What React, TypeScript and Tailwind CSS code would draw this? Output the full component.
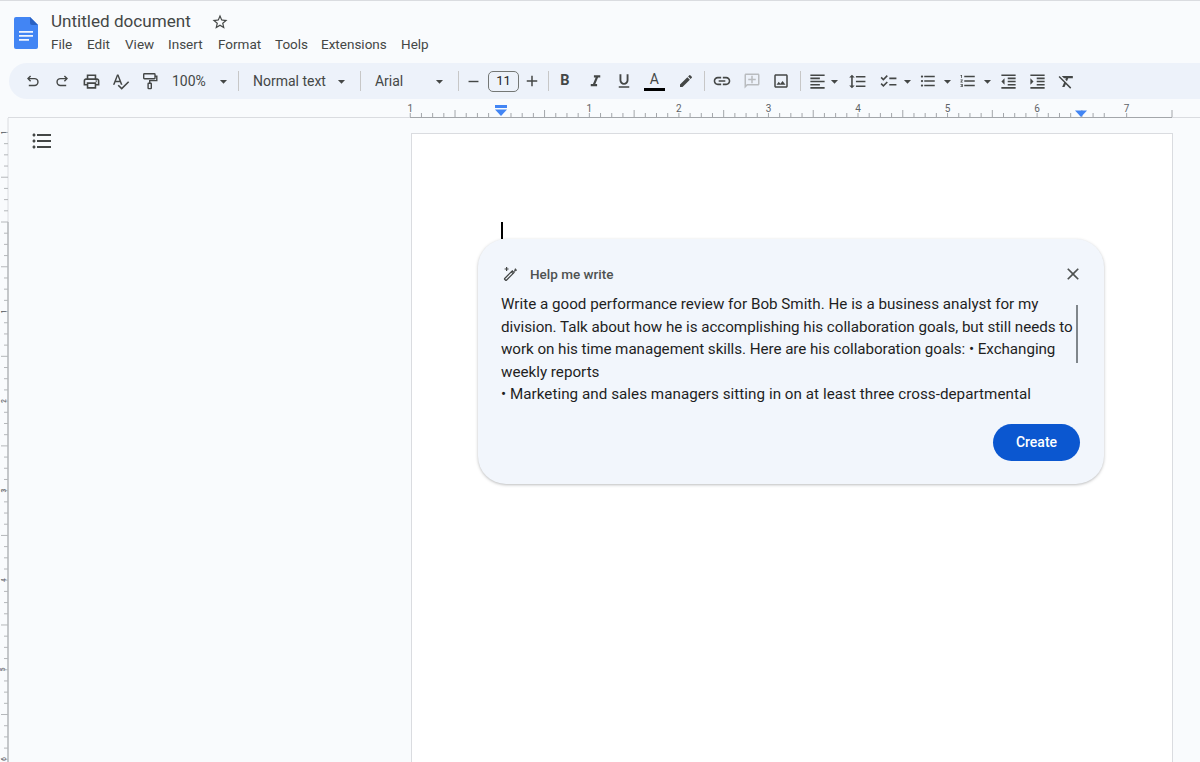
import type { ReactNode } from "react"
import {
  MdOutlineLocalPrintshop,
  MdSpellcheck,
  MdArrowDropDown,
  MdRemove,
  MdAdd,
  MdFormatItalic,
  MdFormatUnderlined,
  MdEdit,
  MdLink,
  MdOutlineAddComment,
  MdOutlineImage,
  MdFormatAlignLeft,
  MdFormatLineSpacing,
  MdChecklist,
  MdFormatListBulleted,
  MdFormatListNumbered,
  MdFormatIndentDecrease,
  MdFormatIndentIncrease,
  MdFormatClear,
  MdStarBorder,
  MdClose,
} from "react-icons/md"

const INCH = 89.55
const ZERO = 499.8

function DocsLogo() {
  return (
    <svg width="24" height="32" viewBox="0 0 24 32" className="shrink-0">
      <path d="M2 0h14l8 8v22a2 2 0 0 1-2 2H2a2 2 0 0 1-2-2V2a2 2 0 0 1 2-2z" fill="#4285f4" />
      <path d="M16 0l8 8h-6a2 2 0 0 1-2-2z" fill="#2a62c4" />
      <path d="M5 14h14v1.7H5zM5 18h14v1.7H5zM5 22h10v1.7H5z" fill="#f1f5fd" />
    </svg>
  )
}

function PenSpark() {
  return (
    <svg width="16" height="16" viewBox="0 0 16 16" fill="none" stroke="#444746" strokeWidth="1.3">
      <path d="M2.6 14.2l-.9-.9a.6.6 0 0 1 0-.8l7.6-7.6 1.7 1.7-7.6 7.6a.6.6 0 0 1-.8 0z" />
      <path d="M8.3 5.9l1.7 1.7" />
      <path d="M12.2 2.6l1.6 1.6-2.6 1.4 1-3z" fill="#444746" strokeWidth="0.6" />
      <path d="M3.6 1v4M1.6 3h4" strokeWidth="1.2" />
    </svg>
  )
}

function UndoIcon({ flip = false }: { flip?: boolean }) {
  return (
    <svg
      width="14"
      height="14"
      viewBox="0 0 14 14"
      fill="none"
      stroke="#444746"
      strokeWidth="1.4"
      className={flip ? "-scale-x-100" : ""}
    >
      <path d="M4.6 2L2 4.6l2.6 2.6" />
      <path d="M2.2 4.6h6.3a3.4 3.4 0 0 1 0 6.9H2.8" />
    </svg>
  )
}

function PaintIcon() {
  return (
    <svg width="16" height="18" viewBox="0 0 16 18" fill="none" stroke="#444746" strokeWidth="1.4">
      <rect x="1.7" y="1.7" width="11.3" height="5" rx="0.7" />
      <path d="M13 4.2h1.8v4.4H7.7v2.6" />
      <rect x="6.1" y="11.2" width="3.2" height="5.4" rx="0.6" />
    </svg>
  )
}

function Slot({ children, w = "w-[29.2px]" }: { children: ReactNode; w?: string }) {
  return <div className={`${w} h-full shrink-0 flex items-center justify-center`}>{children}</div>
}

function Sep() {
  return <div className="w-px h-[20px] bg-[#c7c7c7] shrink-0" />
}

function Caret({ w = "w-[20px]" }: { w?: string }) {
  return (
    <Slot w={w}>
      <MdArrowDropDown size={17} className="shrink-0 text-[#444746]" />
    </Slot>
  )
}

function Toolbar() {
  return (
    <div className="ml-[9px] h-[36px] rounded-l-full bg-[#edf2fa] flex items-center pl-[9.5px] text-[#444746] text-[14px]">
      <Slot><UndoIcon /></Slot>
      <Slot><UndoIcon flip /></Slot>
      <Slot><MdOutlineLocalPrintshop size={19} /></Slot>
      <Slot><MdSpellcheck size={19} /></Slot>
      <Slot><PaintIcon /></Slot>
      <span className="ml-[7.5px] w-[42px] shrink-0">100%</span>
      <Caret />
      <div className="w-[4.5px] shrink-0" />
      <Sep />
      <span className="ml-[13.5px] w-[79px] shrink-0">Normal text</span>
      <Caret />
      <div className="w-[8px] shrink-0" />
      <Sep />
      <span className="ml-[14px] w-[55px] shrink-0">Arial</span>
      <Caret />
      <div className="w-[8px] shrink-0" />
      <Sep />
      <Slot w="w-[29px]"><MdRemove size={17} /></Slot>
      <div className="w-[31px] h-[21px] shrink-0 rounded-[5px] border border-[#747775] flex items-center justify-center text-[13px] text-[#1f1f1f]">
        11
      </div>
      <Slot w="w-[27px]"><MdAdd size={18} /></Slot>
      <div className="w-[2px] shrink-0" />
      <Sep />
      <Slot w="w-[32px]"><span className="text-[14.5px] font-bold">B</span></Slot>
      <Slot w="w-[29px]"><MdFormatItalic size={19} /></Slot>
      <Slot w="w-[29px]"><MdFormatUnderlined size={18} /></Slot>
      <div className="ml-[5px] w-[21px] h-full shrink-0 flex flex-col items-center justify-center">
        <span className="text-[14px] leading-[15px]">A</span>
        <div className="w-[21px] h-[3px] bg-black mt-[1px]" />
      </div>
      <Slot w="w-[39px]"><MdEdit size={16} className="ml-[3px]" /></Slot>
      <Sep />
      <Slot w="w-[35px]"><MdLink size={20} /></Slot>
      <Slot w="w-[25px]"><MdOutlineAddComment size={18} className="-scale-x-100 text-[#b9bcbf]" /></Slot>
      <Slot w="w-[32px]"><MdOutlineImage size={18} /></Slot>
      <div className="w-[3px] shrink-0" />
      <Sep />
      <div className="w-[5px] shrink-0" />
      <Slot w="w-[24px]"><MdFormatAlignLeft size={19} /></Slot>
      <Caret w="w-[9px]" />
      <Slot w="w-[37px]"><MdFormatLineSpacing size={19} /></Slot>
      <Slot w="w-[25px]"><MdChecklist size={19} /></Slot>
      <Caret w="w-[13px]" />
      <Slot w="w-[29px]"><MdFormatListBulleted size={18} /></Slot>
      <Caret w="w-[9px]" />
      <Slot w="w-[33px]"><MdFormatListNumbered size={18} /></Slot>
      <Caret w="w-[5px]" />
      <Slot w="w-[38px]"><MdFormatIndentDecrease size={19} /></Slot>
      <Slot w="w-[19px]"><MdFormatIndentIncrease size={19} className="shrink-0" /></Slot>
      <Slot w="w-[40px]"><MdFormatClear size={19} /></Slot>
    </div>
  )
}

function TopRuler() {
  const ticks = []
  for (let i = -7; i <= 54; i++) {
    const x = ZERO + (i * INCH) / 8
    if (x > 1173) break
    if (i % 8 === 0) continue
    const h = i % 4 === 0 ? 7 : 4
    ticks.push(<line key={i} x1={x} x2={x} y1={117} y2={117 - h} stroke="#a3a6aa" strokeWidth="1" />)
  }
  const labels = [
    { n: 1, x: ZERO - INCH },
    ...[1, 2, 3, 4, 5, 6, 7].map((n) => ({ n, x: ZERO + n * INCH })),
  ]
  return (
    <svg width="1200" height="19" viewBox="0 99 1200 19" className="block">
      <line x1="8" x2="1200" y1="117.5" y2="117.5" stroke="#dadce0" />
      <line x1="410" x2="1172" y1="117.5" y2="117.5" stroke="#a3a6aa" />
      {ticks}
      <line x1="1172" x2="1172" y1="110" y2="117" stroke="#a3a6aa" />
      {labels.map((l) => (
        <g key={l.x}>
          <text x={l.x} y={111.5} textAnchor="middle" fontSize="10" fill="#5f6368" fontFamily="Roboto, sans-serif">
            {l.n}
          </text>
          <line x1={l.x} x2={l.x} y1={113} y2={117} stroke="#a3a6aa" />
        </g>
      ))}
      <rect x="495" y="105" width="12" height="3" fill="#4285f4" />
      <path d="M495 109.5h12l-6 6.5z" fill="#4285f4" />
      <path d="M1075 110.5h12l-6 6.5z" fill="#4285f4" />
    </svg>
  )
}

function LeftRuler() {
  const ticks = []
  for (let i = -8; i <= 48; i++) {
    const y = 222 + (i * INCH) / 8
    const x1 = i % 4 === 0 ? 1 : 4
    ticks.push(<line key={i} x1={x1} x2="8" y1={y} y2={y} stroke="#b4b7ba" />)
  }
  return (
    <svg width="9" height="644" viewBox="0 118 9 644" className="block shrink-0">
      <line x1="8" x2="8" y1="118" y2="222" stroke="#dadce0" />
      <line x1="8" x2="8" y1="222" y2="762" stroke="#8f9397" />
      {ticks}
      {[
        { n: 1, y: 132.5 },
        { n: 1, y: 311.5 },
        { n: 2, y: 401 },
        { n: 3, y: 490.5 },
        { n: 4, y: 580 },
        { n: 5, y: 669.6 },
        { n: 6, y: 759 },
      ].map((l) => (
        <text
          key={l.y}
          x={3.5}
          y={l.y + 2}
          fontSize="7"
          fill="#5f6368"
          textAnchor="middle"
          fontFamily="Roboto, sans-serif"
          transform={`rotate(-90 3.5 ${l.y})`}
        >
          {l.n}
        </text>
      ))}
    </svg>
  )
}

function HelpMeWrite() {
  return (
    <div className="w-[626px] h-[245px] rounded-[28px] bg-[#f2f6fc] shadow-[0_1px_3px_rgba(60,64,67,0.35)] pl-[23px] pr-[24px] pt-[24px]">
      <div className="flex items-center h-[22px] text-[#4f5251]">
        <div className="ml-[2px] w-[27px] shrink-0"><PenSpark /></div>
        <span className="text-[13.5px] font-medium">Help me write</span>
        <MdClose size={20} className="ml-auto -mr-[3px]" />
      </div>
      <div className="flex mt-[8px]">
        <p className="w-[575px] shrink-0 whitespace-nowrap text-[15.2px] leading-[22.5px] text-[#1f1f1f]">
          <span className="block">Write a good performance review for Bob Smith. He is a business analyst for my</span>
          <span className="block tracking-[-0.035px]">division. Talk about how he is accomplishing his collaboration goals, but still needs to</span>
          <span className="block tracking-[-0.05px]">work on his time management skills. Here are his collaboration goals: • Exchanging</span>
          <span className="block">weekly reports</span>
          <span className="block tracking-[0.04px]">• Marketing and sales managers sitting in on at least three cross-departmental</span>
        </p>
        <div className="w-[2px] h-[58px] mt-[12px] bg-[#80868b] shrink-0" />
      </div>
      <div className="flex justify-end mt-[18px]">
        <button className="w-[87px] h-[37px] rounded-full bg-[#0b57d0] text-white text-[14px] font-medium">
          Create
        </button>
      </div>
    </div>
  )
}

export default function App() {
  return (
    <div className="w-[1200px] h-[762px] overflow-hidden bg-[#f9fbfd] font-['Roboto',sans-serif] flex flex-col border-t border-[#dadce0]">
      <header className="h-[62px] shrink-0 flex pl-[14px] pt-[16px]">
        <DocsLogo />
        <div className="ml-[13px] -mt-[7px]">
          <div className="flex items-center h-[24px]">
            <span className="text-[17.1px] text-[#444746]">Untitled document</span>
            <MdStarBorder size={18} className="ml-[20px] text-[#444746]" />
          </div>
          <nav className="flex text-[13.5px] text-[#444746] mt-[1px] leading-[18px]">
            <span className="w-[36px]">File</span>
            <span className="w-[38px]">Edit</span>
            <span className="w-[43px]">View</span>
            <span className="w-[50px]">Insert</span>
            <span className="w-[57px]">Format</span>
            <span className="w-[46px]">Tools</span>
            <span className="w-[80px]">Extensions</span>
            <span>Help</span>
          </nav>
        </div>
      </header>
      <Toolbar />
      <TopRuler />
      <main className="flex flex-1 min-h-0">
        <LeftRuler />
        <div className="w-[402px] shrink-0 pl-[21px] pt-[11px]">
          <MdFormatListBulleted size={24} className="text-[#444746]" />
        </div>
        <div className="w-[762px] shrink-0 mt-[15px] bg-white border border-b-0 border-[#dadce0] pl-[66px] pt-[88px]">
          <div className="ml-[23px] w-[1.5px] h-[17px] bg-black" />
          <HelpMeWrite />
        </div>
      </main>
    </div>
  )
}
